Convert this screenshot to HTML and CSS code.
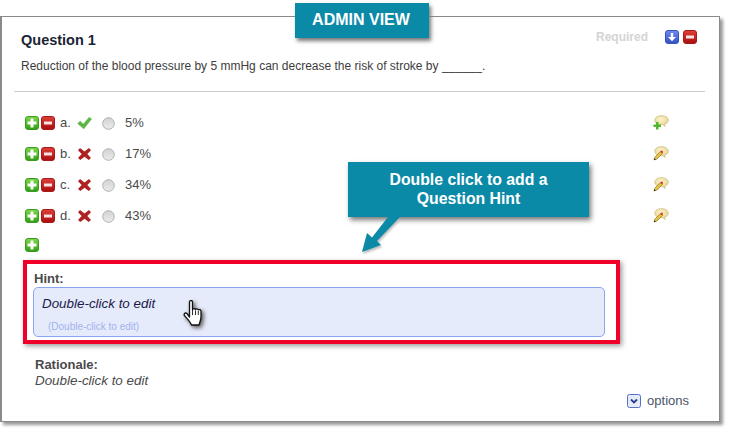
FILE: index.html
```html
<!DOCTYPE html>
<html>
<head>
  <title>Admin View - Question Hint</title>
  <link rel="stylesheet" href="styles.css">
</head>
<body>
  <svg class="defs" width="0" height="0">
    <defs>
      <linearGradient id="gGreen" x1="0" y1="0" x2="0" y2="1"><stop offset="0" stop-color="#7fd84a"/><stop offset="1" stop-color="#2f9e12"/></linearGradient>
      <linearGradient id="gRed" x1="0" y1="0" x2="0" y2="1"><stop offset="0" stop-color="#e0403a"/><stop offset="1" stop-color="#a80d0d"/></linearGradient>
      <linearGradient id="gBlue" x1="0" y1="0" x2="0" y2="1"><stop offset="0" stop-color="#6f8df0"/><stop offset="1" stop-color="#3350c4"/></linearGradient>
      <linearGradient id="gRadio" x1="0" y1="0" x2="0" y2="1"><stop offset="0" stop-color="#d2d2d2"/><stop offset="1" stop-color="#ececec"/></linearGradient>
      <radialGradient id="gBubble" cx="0.45" cy="0.35" r="0.7"><stop offset="0" stop-color="#fbf4cc"/><stop offset="1" stop-color="#e4cf88"/></radialGradient>
      <symbol id="i-plus" viewBox="0 0 14 14">
        <rect x="0.5" y="0.5" width="13" height="13" rx="2.5" fill="url(#gGreen)" stroke="#3c9a22"/>
        <path d="M5.5 2.5h3v3h3v3h-3v3h-3v-3h-3v-3h3z" fill="#fff"/>
      </symbol>
      <symbol id="i-minus" viewBox="0 0 14 14">
        <rect x="0.5" y="0.5" width="13" height="13" rx="2.5" fill="url(#gRed)" stroke="#a51a1a"/>
        <rect x="3" y="5.5" width="8" height="3" fill="#f4e4e4"/>
      </symbol>
      <symbol id="i-down" viewBox="0 0 14 14">
        <rect x="0.5" y="0.5" width="13" height="13" rx="2.5" fill="url(#gBlue)" stroke="#3a55b8"/>
        <path d="M5.8 3h2.400v4H11l-4 4.200L3 7h2.800z" fill="#fff"/>
      </symbol>
      <symbol id="i-check" viewBox="0 0 15 14">
        <path d="M0.500 7.500l2.800-2.500 3 3L12.300 1l2.400 2L6.800 13z" fill="#5cb446" stroke="#8ccc78" stroke-width="0.5"/>
      </symbol>
      <symbol id="i-cross" viewBox="0 0 14 14">
        <path d="M2.500 1L7 4.500 11.500 1 13.500 3.200 9.800 7l3.700 4-2.300 2L7 9.700 2.800 13 .5 11l3.700-4L.5 3.200z" fill="#b02222"/>
      </symbol>
      <symbol id="i-radio" viewBox="0 0 13 13">
        <circle cx="6.5" cy="6.5" r="5.8" fill="url(#gRadio)" stroke="#b0b0b0"/>
      </symbol>
      <symbol id="i-bubble" viewBox="0 0 16 15">
        <path d="M8.500 .7c3.900 0 6.800 1.900 6.800 4.400 0 2.200-1.700 3.700-3.800 4.100l.7 2.300L9.400 9.600H8c-3.700 0-6.200-1.900-6.200-4.500S4.600.7 8.500.7z" fill="url(#gBubble)" stroke="#c9b878" stroke-width="0.7"/>
      </symbol>
      <symbol id="i-bubble-add" viewBox="0 0 16 15">
        <use href="#i-bubble"/>
        <path d="M3 7h2.500v2.500H8V12H5.500v2.500H3V12H.5V9.500H3z" fill="#4cb82a"/>
      </symbol>
      <symbol id="i-bubble-edit" viewBox="0 0 16 15">
        <use href="#i-bubble"/>
        <path d="M1 14l.9-3L8 5l2 2-6 6z" fill="#e8c040" stroke="#6a5a18" stroke-width="0.5"/>
        <path d="M1 14l.5-1.800 1.300 1.300z" fill="#111"/>
        <circle cx="8.700" cy="5.700" r="1.300" fill="#e04040"/>
      </symbol>
    </defs>
  </svg>

  <div class="panel">
    <div class="question-head">
      <h2 class="question-title">Question 1</h2>
      <div class="question-tools">
        <span class="required">Required</span>
        <svg class="icon"><use href="#i-down"/></svg>
        <svg class="icon"><use href="#i-minus"/></svg>
      </div>
    </div>
    <p class="question-text">Reduction of the blood pressure by 5 mmHg can decrease the risk of stroke by ______.</p>
    <hr class="divider">

    <div class="answers">
      <div class="answer">
        <svg class="icon"><use href="#i-plus"/></svg>
        <svg class="icon"><use href="#i-minus"/></svg>
        <span class="letter">a.</span>
        <svg class="mark"><use href="#i-check"/></svg>
        <svg class="radio"><use href="#i-radio"/></svg>
        <span class="value">5%</span>
        <svg class="bubble"><use href="#i-bubble-add"/></svg>
      </div>
      <div class="answer">
        <svg class="icon"><use href="#i-plus"/></svg>
        <svg class="icon"><use href="#i-minus"/></svg>
        <span class="letter">b.</span>
        <svg class="mark"><use href="#i-cross"/></svg>
        <svg class="radio"><use href="#i-radio"/></svg>
        <span class="value">17%</span>
        <svg class="bubble"><use href="#i-bubble-edit"/></svg>
      </div>
      <div class="answer">
        <svg class="icon"><use href="#i-plus"/></svg>
        <svg class="icon"><use href="#i-minus"/></svg>
        <span class="letter">c.</span>
        <svg class="mark"><use href="#i-cross"/></svg>
        <svg class="radio"><use href="#i-radio"/></svg>
        <span class="value">34%</span>
        <svg class="bubble"><use href="#i-bubble-edit"/></svg>
      </div>
      <div class="answer">
        <svg class="icon"><use href="#i-plus"/></svg>
        <svg class="icon"><use href="#i-minus"/></svg>
        <span class="letter">d.</span>
        <svg class="mark"><use href="#i-cross"/></svg>
        <svg class="radio"><use href="#i-radio"/></svg>
        <span class="value">43%</span>
        <svg class="bubble"><use href="#i-bubble-edit"/></svg>
      </div>
    </div>
    <svg class="icon add-answer"><use href="#i-plus"/></svg>

    <div class="hint-frame">
      <div class="field-label hint-label">Hint:</div>
      <div class="hint-box">
        <div class="hint-text">Double-click to edit</div>
        <div class="hint-sub">(Double-click to edit)</div>
      </div>
    </div>

    <div class="rationale">
      <div class="field-label">Rationale:</div>
      <div class="rationale-text">Double-click to edit</div>
    </div>

    <div class="options">
      <svg class="options-icon" viewBox="0 0 14 14">
        <rect x="0.5" y="0.5" width="13" height="13" rx="2" fill="#e6ebfa" stroke="#5570c8"/>
        <path d="M4 5.5l3 3 3-3" fill="none" stroke="#24408f" stroke-width="1.8"/>
      </svg>
      <span>options</span>
    </div>
  </div>

  <div class="admin-tag">ADMIN VIEW</div>
  <div class="callout">Double click to add a<br>Question Hint</div>

  <svg class="arrow" viewBox="0 0 40 38">
    <path d="M1 36L6 17l5 4.500L27 1h12L16 25l4 4z" fill="#0b8aa8"/>
  </svg>

  <svg class="cursor" viewBox="0 0 21 27">
    <path d="M6.500 2c0-2 3-2 3 0v7.500c.6-1.200 2.600-1.200 3 0 .5-1 2.500-.8 2.800.4.800-.7 2.700-.2 2.700 1.300v5.500c0 3-1 5-2 8.300H8.500c-1-3-3-5-6.700-9-1.700-1.800.2-3.800 2-2.600L6.500 17z" fill="#fff" stroke="#111" stroke-width="1.300" stroke-linejoin="round"/>
    <path d="M9.500 10v5M12.500 10.500v4.500M15.300 11v4" stroke="#111" stroke-width="0.9" fill="none"/>
  </svg>
</body>
</html>
```

FILE: styles.css
```css
body {
  margin: 0;
  width: 730px;
  height: 432px;
  position: relative;
  overflow: hidden;
  background-color: #fff;
  font-family: "Liberation Sans", Arial, sans-serif;
  color: #444;
}

.defs {
  position: absolute;
}

.panel {
  box-sizing: border-box;
  width: 720px;
  height: 406px;
  margin-top: 16px;
  padding: 14px 14px 0 19px;
  border: 1px solid #8a8a8a;
  border-left-width: 2px;
  box-shadow: 3px 3px 3px #999;
  background-color: #fff;
}

.question-head {
  display: flex;
  justify-content: space-between;
  align-items: flex-start;
}

.question-title {
  margin: 0;
  font-size: 14.5px;
  line-height: 18px;
  color: #1b2433;
}

.question-tools {
  display: flex;
  align-items: center;
  gap: 4px;
  margin-top: -1px;
  margin-right: 8px;
}

.required {
  margin-right: 13px;
  font-size: 12px;
  font-weight: bold;
  color: #d4d4d4;
}

.icon {
  display: block;
  width: 14px;
  height: 14px;
  flex: none;
}

.question-text {
  margin: 10px 0 0;
  font-size: 12px;
  line-height: 14px;
  color: #3d3d3d;
}

.divider {
  height: 1px;
  margin: 18px 0 0 -7px;
  border: none;
  background-color: #ccc;
}

.answers {
  display: flex;
  flex-direction: column;
  gap: 17px;
  margin-top: 24px;
  margin-left: 4px;
}

.answer {
  display: flex;
  align-items: center;
  height: 14px;
  gap: 2px;
}

.letter {
  width: 16px;
  margin-left: 3px;
  padding-bottom: 2px;
  font-size: 13px;
  color: #4a4a4a;
}

.mark {
  width: 15px;
  height: 14px;
  margin-left: -1px;
}

.radio {
  width: 13px;
  height: 13px;
  margin-left: 8px;
}

.value {
  width: 526px;
  margin-left: 8px;
  padding-bottom: 2px;
  font-size: 13px;
  color: #4a4a4a;
}

.bubble {
  width: 16px;
  height: 15px;
  margin-top: -2px;
}

.add-answer {
  margin: 15px 0 0 4px;
}

.hint-frame {
  box-sizing: border-box;
  width: 597px;
  height: 84px;
  margin: 8px 0 0 2px;
  padding: 8px 11px 0 6px;
  border: 4px solid #f00028;
  box-shadow: 2px 2px 5px #999;
}

.field-label {
  font-size: 13px;
  line-height: 14px;
  font-weight: bold;
  color: #4a4a4a;
}

.hint-label {
  margin-left: 1px;
}

.hint-box {
  box-sizing: border-box;
  height: 50px;
  margin-top: 1px;
  padding: 9px 8px 0;
  border: 1px solid #8aa6f0;
  border-radius: 5px;
  background-color: #e6ebfb;
}

.hint-text {
  font-size: 13.4px;
  line-height: 14px;
  font-style: italic;
  color: #1a1a4a;
}

.hint-sub {
  margin: 10px 0 0 6px;
  font-size: 10px;
  line-height: 12px;
  color: #9fb3ee;
}

.rationale {
  margin: 14px 0 0 14px;
}

.rationale-text {
  font-size: 13.4px;
  line-height: 14px;
  margin-top: 2px;
  font-style: italic;
  color: #4a4a4a;
}

.options {
  display: flex;
  align-items: center;
  gap: 6px;
  justify-content: flex-end;
  margin: 6px 16px 0 0;
  font-size: 13px;
  line-height: 14px;
  color: #4a5568;
}

.options-icon {
  width: 14px;
  height: 14px;
}

/* annotations laid over the screenshot */
.admin-tag {
  position: absolute;
  left: 295px;
  top: 3px;
  box-sizing: border-box;
  width: 134px;
  height: 35px;
  padding-right: 2px;
  line-height: 33px;
  text-align: center;
  font-size: 16px;
  font-weight: bold;
  color: #fff;
  background-color: #0b8aa8;
  box-shadow: 2px 3px 4px #777;
}

.callout {
  position: absolute;
  left: 348px;
  top: 162px;
  box-sizing: border-box;
  width: 241px;
  height: 55px;
  padding-top: 8px;
  line-height: 19px;
  text-align: center;
  font-size: 15.8px;
  font-weight: bold;
  color: #fff;
  background-color: #0b8aa8;
  box-shadow: 2px 3px 5px #777;
}

.arrow {
  position: absolute;
  left: 361px;
  top: 216px;
  width: 40px;
  height: 38px;
  filter: drop-shadow(1px 2px 1px #bbb);
}

.cursor {
  position: absolute;
  left: 183px;
  top: 300px;
  width: 21px;
  height: 27px;
  filter: drop-shadow(2px 2px 2px #555);
}
```
